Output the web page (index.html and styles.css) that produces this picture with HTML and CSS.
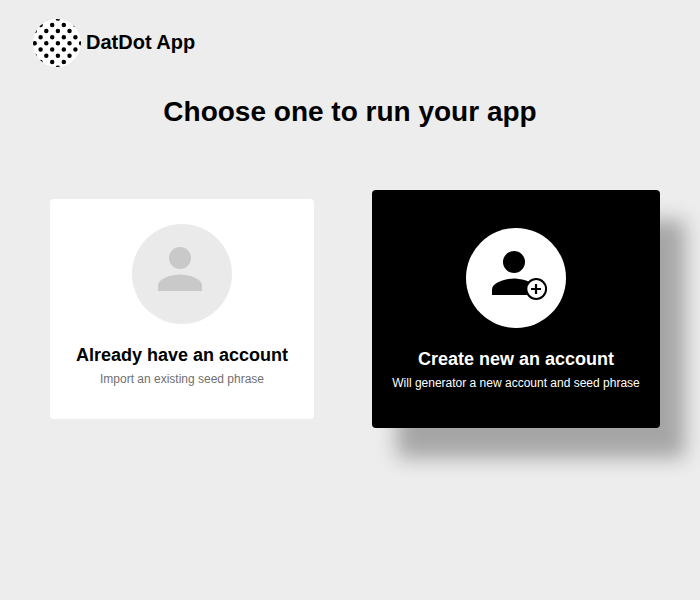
FILE: index.html
```
<!DOCTYPE html>
<html lang="en">
<head>
<meta charset="utf-8">
<title>DatDot App</title>
<link rel="stylesheet" href="styles.css">
</head>
<body>
<header class="brand">
  <svg class="logo" viewBox="0 0 48 48" aria-hidden="true">
    <defs>
      <clipPath id="disc"><circle cx="24" cy="24" r="24"/></clipPath>
    </defs>
    <circle cx="24" cy="24" r="24" fill="#fff"/>
    <!-- Each row is a dashed line whose zero-length dashes have round caps. -->
    <g clip-path="url(#disc)" stroke="#000" stroke-width="4.5" stroke-linecap="round" stroke-dasharray="0 11.6">
      <path d="M1.7 -.4H49M1.7 12H49M1.7 24.3H49M1.7 36.7H49M1.7 48.8H49"/>
      <path d="M7.6 6H49M7.6 18.2H49M7.6 30.5H49M7.6 43H49"/>
    </g>
  </svg>
  <span class="brand-name">DatDot App</span>
</header>
<main>
  <h1 class="title">Choose one to run your app</h1>
  <div class="options">
    <section class="card">
      <svg class="avatar" viewBox="0 0 100 100" aria-hidden="true">
        <circle cx="50" cy="50" r="50" fill="#eaeaea"/>
        <g fill="#c9c9c9">
          <circle cx="48" cy="34" r="11"/>
          <path d="M48 50.5c-7.34 0-22 3.69-22 11V67h44v-5.5c0-7.31-14.66-11-22-11z"/>
        </g>
      </svg>
      <h2 class="card-title">Already have an account</h2>
      <p class="card-text">Import an existing seed phrase</p>
    </section>
    <section class="card card-active">
      <svg class="avatar" viewBox="0 0 100 100" aria-hidden="true">
        <circle cx="50" cy="50" r="50" fill="#fff"/>
        <circle cx="48" cy="34" r="11"/>
        <path d="M48 50.5c-7.34 0-22 3.69-22 11V67h44v-5.5c0-7.31-14.66-11-22-11z"/>
        <circle cx="70.2" cy="61" r="9.9" fill="#fff" stroke="#000" stroke-width="2"/>
        <path d="M65 61h10M70 56v10" stroke="#000" stroke-width="2.2"/>
      </svg>
      <h2 class="card-title">Create new an account</h2>
      <p class="card-text">Will generator a new account and seed phrase</p>
    </section>
  </div>
</main>
</body>
</html>
```

FILE: styles.css
```
* { box-sizing: border-box; }
body {
  margin: 0;
  height: 600px;
  overflow: hidden;
  background: #ededed;
  color: #000;
  font-family: "Liberation Sans", Arial, sans-serif;
}
.brand {
  display: flex;
  align-items: center;
  gap: 5px;
  padding: 19px 33px 0;
}
.logo { width: 48px; height: 48px; }
.brand-name {
  font-size: 20px;
  font-weight: 700;
  line-height: 24px;
  margin-top: -2px;
}
.title {
  margin: 28px 0 0;
  font-size: 28px;
  line-height: 34px;
  text-align: center;
}
.options {
  display: flex;
  align-items: center;
  justify-content: space-between;
  margin: 61px 40px 0 50px;
}
.card {
  width: 264px;
  height: 220px;
  padding-top: 25px;
  border-radius: 4px;
  background: #fff;
  text-align: center;
}
.card-active {
  width: 288px;
  height: 238px;
  padding-top: 38px;
  background: #000;
  color: #fff;
  box-shadow: 25px 30px 20px rgba(0, 0, 0, .3);
}
.avatar { display: block; width: 100px; height: 100px; margin: 0 auto; }
.card-title {
  margin: 20px 0 0;
  font-size: 18px;
  line-height: 22px;
}
.card-text {
  margin: 6px 0 0;
  font-size: 12px;
  line-height: 14px;
  color: #707070;
}
.card-active .card-text { color: #fff; }
```
